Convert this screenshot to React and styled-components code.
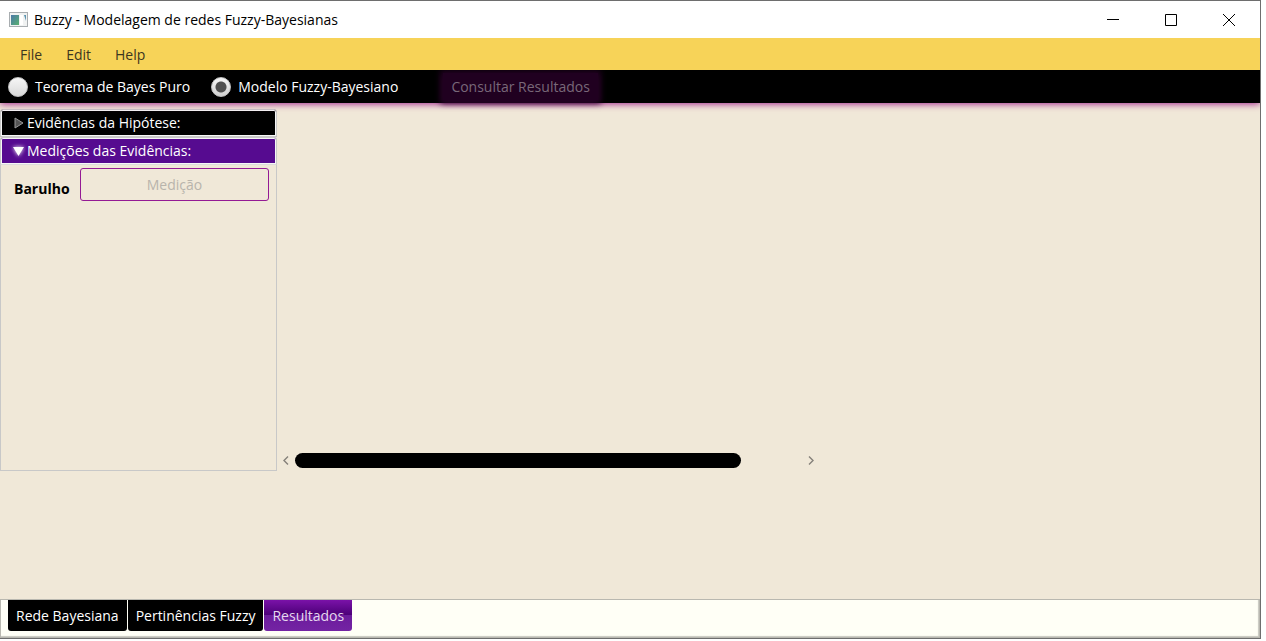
import React, { useState } from 'react';
import styled, { createGlobalStyle, css } from 'styled-components';

const GlobalStyle = createGlobalStyle`
  * { box-sizing: border-box; }
  body {
    margin: 0;
    background: #fff;
    font-family: 'Segoe UI', 'Open Sans', 'Noto Sans', sans-serif;
    font-size: 14px;
    line-height: 20px;
  }
  button, input { font: inherit; margin: 0; }
  button { border: 0; padding: 0; background: none; color: inherit; }
`;

const Page = styled.div`
  display: flex;
  min-height: 100vh;
  padding: 0 5px 2px 0;
`;

const Window = styled.div`
  flex: 1;
  display: flex;
  flex-direction: column;
  background: #f0e8d8;
  border: solid #6e6e6e;
  border-width: 1px 1px 1px 0;
`;

const TitleBar = styled.header`
  display: flex;
  align-items: center;
  height: 37px;
  padding: 0 2px 0 9px;
  background: #fff;
  color: #000;
`;

const Title = styled.h1`
  flex: 1;
  margin: 0 0 0 6px;
  font-size: 14px;
  font-weight: 400;
`;

const WindowButton = styled.button`
  display: grid;
  place-items: center;
  width: 58px;
  height: 35px;
`;

const MenuBar = styled.nav`
  display: flex;
  gap: 24px;
  align-items: center;
  height: 32px;
  padding: 1px 20px 0;
  background: #f7d358;
  color: #3c3620;
`;

const ToolBar = styled.div`
  position: relative;
  display: flex;
  align-items: center;
  height: 33px;
  padding: 0 8px;
  background: #000;
  color: #fff;
  box-shadow: 0 1px 7px #a0208c;
  clip-path: inset(0 0 -12px 0);
`;

const RadioLabel = styled.label`
  display: flex;
  align-items: center;
  gap: 7px;
  margin-right: 21px;
`;

const Radio = styled.input`
  appearance: none;
  width: 20px;
  height: 20px;
  border-radius: 50%;
  border: 1px solid #c4c4c4;
  background: linear-gradient(#f6f6f6, #d9d9d9);
  &:checked {
    background: radial-gradient(circle, #505050 0 5px, transparent 6px), linear-gradient(#f6f6f6, #d0d0d0);
  }
`;

const QueryButton = styled.button`
  height: 27px;
  margin-left: 24px;
  padding: 0 8px;
  background: #200020;
  color: #796879;
  box-shadow: 0 0 6px 3px #200020, 0 3px 6px rgba(160, 32, 140, 0.4);
`;

const Body = styled.main`
  flex: 1;
  display: flex;
  align-items: flex-start;
  padding-top: 6px;
`;

const Accordion = styled.section`
  flex: none;
  display: flex;
  flex-direction: column;
  width: 277px;
  height: 362px;
`;

const AccordionTitle = styled.button`
  display: flex;
  align-items: center;
  flex: none;
  height: 28px;
  padding: 0 0 0 10px;
  border: 1px solid #c8c8c8;
  border-bottom-color: ${({ $open }) => ($open ? '#dcdcdc' : '#c8c8c8')};
  border-radius: 3px 3px 0 0;
  background: ${({ $open }) => ($open ? '#560b90' : '#000')};
  box-shadow: inset 0 0 0 1px #f6f6f6;
  color: #fff;
  text-align: left;
`;

const Arrow = styled.svg`
  flex: none;
  margin-right: 1px;
  overflow: visible;
  ${({ $open }) => $open && css`filter: drop-shadow(0 0 2px #fff);`}
`;

const AccordionContent = styled.div`
  flex: 1;
  padding: 3px 7px 0 13px;
  border: solid #c8c8c8;
  border-width: 0 1px 1px;
`;

const Field = styled.label`
  display: flex;
  align-items: center;
  font-weight: 700;
`;

const FieldName = styled.span`
  flex: none;
  width: 66px;
  padding-top: 8px;
`;

const FieldInput = styled.input`
  flex: 1;
  min-width: 0;
  height: 33px;
  padding: 0 8px;
  border: 1px solid #941a94;
  border-radius: 3px;
  background: transparent;
  text-align: center;
  font-weight: 400;
  &::placeholder { color: #b8b4ac; opacity: 1; }
`;

const ResultPane = styled.section`
  display: flex;
  flex-direction: column;
  justify-content: flex-end;
  width: 43.1%;
  height: 362px;
  padding: 0 4px 3px;
`;

const ScrollRow = styled.div`
  display: flex;
  align-items: center;
  height: 15px;
`;

const ScrollArrow = styled.button`
  display: grid;
  place-items: center;
  width: 10px;
  height: 15px;
`;

const Track = styled.div`
  flex: 1;
  margin: 0 4px;
`;

const Thumb = styled.div`
  width: 88%;
  height: 15px;
  border-radius: 8px;
  background: #000;
`;

const TabBar = styled.footer`
  display: flex;
  gap: 1px;
  align-items: flex-start;
  height: 39px;
  padding-left: 7px;
  border: 1px solid #b9b8b0;
  background: #fffff6;
  box-shadow: inset -1px -1px 1px #c8c8c0;
`;

const Tab = styled.button`
  height: 31px;
  padding: 0 8px;
  border-radius: 0 0 3px 3px;
  color: ${({ $active }) => ($active ? '#e6d8ee' : '#fff')};
  background: ${({ $active }) =>
    $active ? 'linear-gradient(#7a12a8, #4c0078 48%, #6c1c9c 49%, #7424a4)' : '#000'};
`;

const AppIcon = () => (
  <svg width="19" height="16" viewBox="0 0 19 16" aria-hidden="true">
    <defs>
      <linearGradient id="screen" x1="0" y1="0" x2="1" y2="1">
        <stop offset="0" stopColor="#4a78a8" />
        <stop offset="1" stopColor="#58b070" />
      </linearGradient>
    </defs>
    <rect x=".5" y=".5" width="18" height="14" fill="#f0f2f2" stroke="#a8adb0" />
    <rect x="2" y="3" width="8" height="10" fill="url(#screen)" />
    <rect x="11" y="3" width="3" height="10" fill="#fff" />
    <path d="M15 3h2v6z" fill="#5c94b0" />
  </svg>
);

const WINDOW_ICONS = [
  ['Minimizar', 'M0 5.5h12'],
  ['Maximizar', 'M.5 .5h11v11h-11z'],
  ['Fechar', 'M0 0l12 12M12 0L0 12'],
];

const SECTIONS = ['Evidências da Hipótese:', 'Medições das Evidências:'];
const MODELS = ['Teorema de Bayes Puro', 'Modelo Fuzzy-Bayesiano'];
const TABS = ['Rede Bayesiana', 'Pertinências Fuzzy', 'Resultados'];

export default function App() {
  const [model, setModel] = useState(MODELS[1]);
  return (
    <Page>
      <GlobalStyle />
      <Window>
        <TitleBar>
          <AppIcon />
          <Title>Buzzy - Modelagem de redes Fuzzy-Bayesianas</Title>
          {WINDOW_ICONS.map(([name, d]) => (
            <WindowButton key={name} aria-label={name}>
              <svg width="12" height="12" fill="none" stroke="#000">
                <path d={d} />
              </svg>
            </WindowButton>
          ))}
        </TitleBar>
        <MenuBar>
          {['File', 'Edit', 'Help'].map((m) => <button key={m}>{m}</button>)}
        </MenuBar>
        <ToolBar>
          {MODELS.map((m) => (
            <RadioLabel key={m}>
              <Radio type="radio" name="model" checked={model === m} onChange={() => setModel(m)} />
              {m}
            </RadioLabel>
          ))}
          <QueryButton disabled>Consultar Resultados</QueryButton>
        </ToolBar>
        <Body>
          <Accordion>
            <AccordionTitle aria-expanded="false">
              <Arrow width="15" height="12" viewBox="0 0 15 12">
                <path d="M4 1l8 5-8 5z" fill="#555" stroke="#999" />
              </Arrow>
              {SECTIONS[0]}
            </AccordionTitle>
            <AccordionTitle $open aria-expanded="true">
              <Arrow $open width="15" height="12" viewBox="0 0 15 12">
                <path d="M2 2h11l-5.500 9z" fill="#fff" />
              </Arrow>
              {SECTIONS[1]}
            </AccordionTitle>
            <AccordionContent>
              <Field>
                <FieldName>Barulho</FieldName>
                <FieldInput placeholder="Medição" />
              </Field>
            </AccordionContent>
          </Accordion>
          <ResultPane>
            <ScrollRow>
              <ScrollArrow aria-label="Rolar para a esquerda">
                <svg width="6" height="9" fill="none" stroke="#85817a" strokeWidth="1.4">
                  <path d="M5 .5l-4 4 4 4" />
                </svg>
              </ScrollArrow>
              <Track>
                <Thumb />
              </Track>
              <ScrollArrow aria-label="Rolar para a direita">
                <svg width="6" height="9" fill="none" stroke="#85817a" strokeWidth="1.4">
                  <path d="M1 .5l4 4-4 4" />
                </svg>
              </ScrollArrow>
            </ScrollRow>
          </ResultPane>
        </Body>
        <TabBar>
          {TABS.map((t) => <Tab key={t} $active={t === 'Resultados'}>{t}</Tab>)}
        </TabBar>
      </Window>
    </Page>
  );
}
